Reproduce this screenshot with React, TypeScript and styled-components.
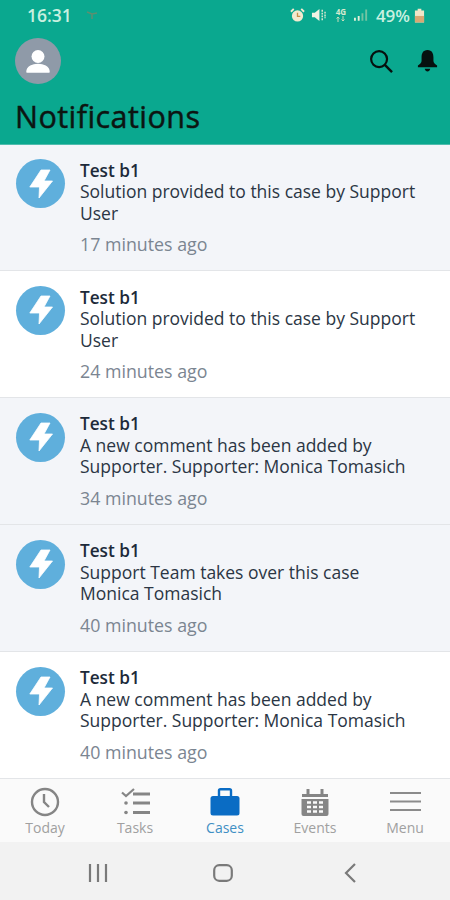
import React from "react";
import styled, { createGlobalStyle } from "styled-components";

const Global = createGlobalStyle`
  html, body { margin: 0; padding: 0; background: #f3f3f3; }
  * { box-sizing: border-box; }
  body { font-family: "Open Sans", "Noto Sans", sans-serif; }
`;
const Screen = styled.div`
  width: 450px; height: 900px; display: flex; flex-direction: column; overflow: hidden;
`;
const Header = styled.header`
  height: 144.5px; flex: none; background: #0aa88f; display: flex; flex-direction: column;
  border-bottom: 1px solid #4fbcae;
`;
const StatusBar = styled.div`
  height: 30px; padding: 0 25px 0 27px; display: flex; align-items: center; justify-content: space-between;
  color: #c9f0e0; font-size: 17.5px; font-weight: 600;
`;
const StatusGroup = styled.div`
  display: flex; align-items: center; gap: 6px;
`;
const Battery = styled.span`
  font-size: 17px; margin: 0 -2px 0 1px;
`;
const NetworkIcon = styled.span`
  display: flex; flex-direction: column; align-items: center; width: 12px; margin: 0 1px 0 3px;
  font-size: 8px; line-height: 8px; font-weight: 700; color: #d8ead0;
`;
const ToolRow = styled.div`
  height: 46px; margin-top: 8px; padding: 0 12px 0 15px; display: flex; align-items: center; justify-content: space-between;
`;
const Avatar = styled.div`
  width: 46px; height: 46px; border-radius: 50%; background: #8f9aa8; display: flex; align-items: center; justify-content: center;
`;
const ToolIcons = styled.div`
  display: flex; align-items: center; gap: 24px; margin-top: -1px;
`;
const Title = styled.h1`
  margin: 12px 0 0 15px; font-size: 30.5px; line-height: 40px; font-weight: 400; color: #0c1512; letter-spacing: 0.45px;
  -webkit-text-stroke: 0.45px #0c1512;
`;
const List = styled.div`
  flex: none; display: flex; flex-direction: column;
`;
const Row = styled.div<{ $unread: boolean }>`
  height: 126.9px; flex: none; background: ${(p) => (p.$unread ? "#f3f5f9" : "#ffffff")};
  border-bottom: 1.5px solid #e3e5e8; padding: 14px 16px 0 16px; display: flex; gap: 15px;
`;
const Badge = styled.div`
  width: 49px; height: 49px; flex: none; border-radius: 50%; background: #5fafdc; display: flex; align-items: center; justify-content: center;
  margin-top: 0.5px;
`;
const Body = styled.div`
  display: flex; flex-direction: column; min-width: 0; padding-top: 2.2px;
`;
const Heading = styled.div`
  font-size: 17.2px; line-height: 20px; font-weight: 600; color: #1d2a3a;
`;
const Message = styled.div`
  font-size: 17.5px; line-height: 21.5px; color: #2b3644; margin-top: 0.5px; width: 340px;
`;
const Time = styled.div`
  font-size: 17.8px; line-height: 22px; color: #7b8591; margin-top: 9px;
`;
const TabBar = styled.nav`
  height: 63.3px; flex: none; background: #fafafa; display: grid; grid-template-columns: repeat(5, 1fr);
`;
const Tab = styled.div<{ $active?: boolean }>`
  display: flex; flex-direction: column; align-items: center; justify-content: flex-start; padding-top: 7px;
  color: ${(p) => (p.$active ? "#3f8fc4" : "#a0a0a0")}; font-size: 14px; line-height: 18px;
`;
const TabIcon = styled.div`
  height: 32px; display: flex; align-items: center; justify-content: center; margin-bottom: 1px;
`;
const NavBar = styled.div`
  flex: 1; background: #f2f2f2; display: grid; grid-template-columns: 196px 54px 1fr; align-items: center; padding-top: 3px;
`;
const NavSlot = styled.div`
  display: flex; justify-content: center;
`;

const Bolt = () => (
  <svg width="24" height="30" viewBox="0 0 24 30">
    <path d="M12 1 L0.8 18 H10.5 L10 29 L23.5 12 H15 L21 1 Z" fill="#fff" stroke="#fff" strokeWidth="0.8" strokeLinejoin="round" />
  </svg>
);

const items = [
  { unread: true, msg: "Solution provided to this case by Support User", time: "17 minutes ago" },
  { unread: false, msg: "Solution provided to this case by Support User", time: "24 minutes ago" },
  { unread: true, msg: "A new comment has been added by Supporter. Supporter: Monica Tomasich", time: "34 minutes ago" },
  { unread: true, msg: "Support Team takes over this case Monica Tomasich", time: "40 minutes ago" },
  { unread: false, msg: "A new comment has been added by Supporter. Supporter: Monica Tomasich", time: "40 minutes ago" },
];

export default function App() {
  return (
    <Screen>
      <Global />
      <Header>
        <StatusBar>
          <StatusGroup>
            <span>16:31</span>
            <svg width="12" height="10" viewBox="0 0 12 10" style={{ marginLeft: 8 }}>
              <path d="M1 2 L6 4 L11 3 M6 4 V9" stroke="#5d8f70" strokeWidth="1.6" fill="none" />
            </svg>
          </StatusGroup>
          <StatusGroup>
            <svg width="15" height="15" viewBox="0 0 16 16">
              <circle cx="8" cy="8.5" r="6" fill="#f4ead0" />
              <path d="M8 5 V9 H11" stroke="#c98f4a" strokeWidth="1.4" fill="none" />
              <path d="M1 4 L4 1 M15 4 L12 1" stroke="#f4ead0" strokeWidth="2" />
            </svg>
            <svg width="15" height="14" viewBox="0 0 16 15">
              <path d="M1 5 H4 L9 1 V14 L4 10 H1 Z" fill="#f1f3e4" />
              <path d="M12 2 V13 M15 4 V11" stroke="#dbe8d0" strokeWidth="1.6" strokeDasharray="2 1" />
            </svg>
            <NetworkIcon>
              4G
              <svg width="11" height="6" viewBox="0 0 11 6">
                <path d="M3 6 V1 M1.5 2.5 L3 1 L4.5 2.5 M8 0 V5 M6.5 3.5 L8 5 L9.5 3.5" stroke="#c4dcb8" strokeWidth="1" fill="none" />
              </svg>
            </NetworkIcon>
            <svg width="15" height="14" viewBox="0 0 16 14">
              <path d="M1 13 V10 M5 13 V8" stroke="#e4efd8" strokeWidth="2" />
              <path d="M9 13 V5 M13 13 V1" stroke="#74c4a2" strokeWidth="2" />
            </svg>
            <Battery>49%</Battery>
            <svg width="11" height="15" viewBox="0 0 12 15">
              <path d="M4 0 H8 V2 H11 V15 H1 V2 H4 Z" fill="#f0e6c8" />
              <rect x="1" y="8" width="10" height="7" fill="#d8a874" />
            </svg>
          </StatusGroup>
        </StatusBar>
        <ToolRow>
          <Avatar>
            <svg width="24" height="25" viewBox="0 0 24 25">
              <circle cx="12" cy="7.5" r="6.5" fill="#fff" />
              <path d="M1 23 C1 17.5 7 15.5 12 15.5 C17 15.5 23 17.5 23 23 Z" fill="#fff" stroke="#fff" strokeLinejoin="round" strokeWidth="1.5" />
            </svg>
          </Avatar>
          <ToolIcons>
            <svg width="24" height="24" viewBox="0 0 25 25">
              <circle cx="10.5" cy="10.5" r="8.3" fill="none" stroke="#06110f" strokeWidth="2.3" />
              <path d="M16.5 16.5 L24 24" stroke="#06110f" strokeWidth="2.5" />
            </svg>
            <svg width="21" height="23" viewBox="0 0 23 25">
              <path d="M11.5 1 C16.5 1 18 5 18 9 V13 C18 15 20 16.5 22 18 V20 H1 V18 C3 16.5 5 15 5 13 V9 C5 5 6.5 1 11.5 1 Z" fill="#06110f" />
              <path d="M8.5 21.5 H14.5 C14 23.5 13 24.5 11.5 24.5 C10 24.5 9 23.5 8.5 21.5 Z" fill="#06110f" />
            </svg>
          </ToolIcons>
        </ToolRow>
        <Title>Notifications</Title>
      </Header>
      <List>
        {items.map((it, i) => (
          <Row key={i} $unread={it.unread}>
            <Badge><Bolt /></Badge>
            <Body>
              <Heading>Test b1</Heading>
              <Message>{it.msg}</Message>
              <Time>{it.time}</Time>
            </Body>
          </Row>
        ))}
      </List>
      <TabBar>
        <Tab>
          <TabIcon>
            <svg width="30" height="30" viewBox="0 0 30 30">
              <circle cx="15" cy="15" r="13" fill="none" stroke="#858585" strokeWidth="2.4" />
              <path d="M14 7 V15 L19 20" fill="none" stroke="#858585" strokeWidth="2.4" />
            </svg>
          </TabIcon>
          Today
        </Tab>
        <Tab>
          <TabIcon>
            <svg width="29" height="27" viewBox="0 0 29 27">
              <path d="M1 4.5 L5 8 L13 1" fill="none" stroke="#858585" strokeWidth="2.2" />
              <path d="M12 6 H29 M12 15 H29 M12 24.5 H29" stroke="#858585" strokeWidth="2.8" />
              <circle cx="5" cy="15" r="1.8" fill="#858585" />
              <circle cx="5" cy="24.5" r="1.8" fill="#858585" />
            </svg>
          </TabIcon>
          Tasks
        </Tab>
        <Tab $active>
          <TabIcon>
            <svg width="30" height="28" viewBox="0 0 30 28">
              <path d="M9 8 V2.5 Q9 1.2 10.5 1.2 H19.5 Q21 1.2 21 2.5 V8" fill="none" stroke="#0a6cc4" strokeWidth="2.4" />
              <rect x="0.5" y="8" width="29" height="19.5" rx="2.5" fill="#0a6cc4" />
            </svg>
          </TabIcon>
          Cases
        </Tab>
        <Tab>
          <TabIcon>
            <svg width="30" height="30" viewBox="0 0 30 30">
              <path d="M2 7 H28 V10 H2 Z" fill="#858585" />
              <path d="M8 2 V7 M22 2 V7" stroke="#858585" strokeWidth="3" />
              <path d="M1.5 12 H28.5 V27 A2 2 0 0 1 26.5 29 H3.5 A2 2 0 0 1 1.5 27 Z" fill="#858585" />
              <path d="M7 15.5 H11 M13 15.5 H17 M19 15.5 H23 M7 20 H11 M13 20 H17 M19 20 H23 M7 24.5 H11 M13 24.5 H17 M19 24.5 H23" stroke="#fafafa" strokeWidth="2.4" />
            </svg>
          </TabIcon>
          Events
        </Tab>
        <Tab>
          <TabIcon>
            <svg width="31" height="21" viewBox="0 0 31 21">
              <path d="M0 2 H31 M0 10.5 H31 M0 19 H31" stroke="#8b8b8b" strokeWidth="2" />
            </svg>
          </TabIcon>
          Menu
        </Tab>
      </TabBar>
      <NavBar>
        <NavSlot>
          <svg width="20" height="18" viewBox="0 0 20 18">
            <path d="M2 0 V18 M10 0 V18 M18 0 V18" stroke="#7a7a7a" strokeWidth="2.2" />
          </svg>
        </NavSlot>
        <NavSlot>
          <svg width="20" height="18" viewBox="0 0 20 18">
            <rect x="1.2" y="1.2" width="17.6" height="15.6" rx="5" fill="none" stroke="#7a7a7a" strokeWidth="2.2" />
          </svg>
        </NavSlot>
        <NavSlot>
          <svg width="12" height="20" viewBox="0 0 12 20">
            <path d="M11 1 L2 10 L11 19" fill="none" stroke="#7a7a7a" strokeWidth="2.2" />
          </svg>
        </NavSlot>
      </NavBar>
    </Screen>
  );
}
